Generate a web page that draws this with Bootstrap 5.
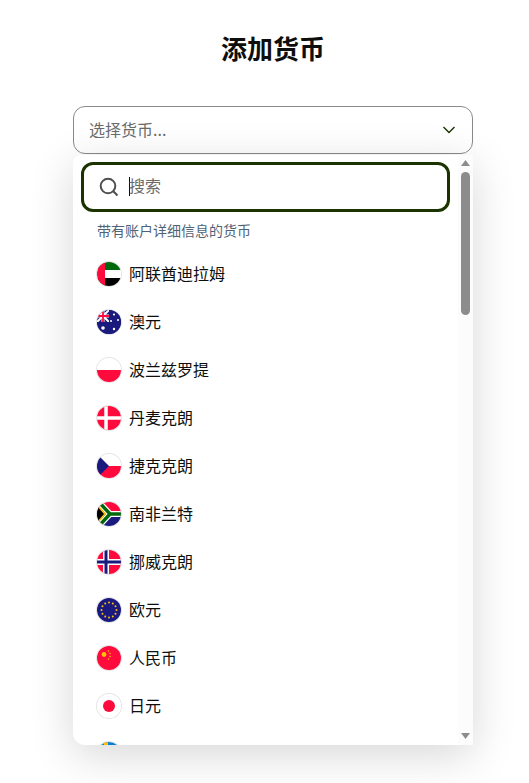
<!DOCTYPE html>
<html lang="zh">
<head>
<meta charset="utf-8">
<title>添加货币</title>
<link rel="stylesheet" href="https://cdn.jsdelivr.net/npm/bootstrap@5.3.0/dist/css/bootstrap.min.css">
<style>
html,body{height:100%;overflow:hidden;background:#fff}
body{font-family:"Noto Sans CJK SC","Noto Sans",sans-serif;color:#0e0f0c}
.shell{width:400px;margin-left:73px;padding-top:30px}
.page-title{font-size:26px;font-weight:700;line-height:36px;margin:0 0 40px;text-align:center;color:#0e0f0c}
.picker-wrap{position:relative}
.picker{height:48px;padding:0 16px 2px 15px;border:1px solid #8a8a8a;border-radius:12px;background:#fff;color:#6a6c6a;font-size:16px;line-height:24px}
.picker:hover,.picker:active{background:#fff;border-color:#8a8a8a;color:#6a6c6a}
.picker-chevron{position:relative;top:1px}
.menu-panel{position:absolute;left:0;top:49px;width:400px;height:590px;background:#fff;border-radius:8px 0 0 12px;box-shadow:0 10px 44px rgba(0,0,0,.16);overflow:hidden;padding-right:15px;z-index:2}
.menu-list{height:100%;overflow:hidden}
.scroll-rail{position:absolute;top:0;right:0;bottom:0;width:15px;background:#fcfcfc;padding:5px 3px}
.rail-up,.rail-down{display:block;width:9px;height:6px}
.rail-thumb{width:9px;height:143px;margin-top:6px;background:#8c8c8c;border-radius:5px}
.rail-down{position:absolute;left:3px;bottom:6px}
.search-box{height:50px;margin:7px 8px 0;border:3px solid #1b3300;border-radius:12px;padding:0 13px 0 15px;background:#fff}
.search-input{border:0;outline:0;padding:0;margin-left:-1px;box-shadow:none;font-size:16px;line-height:24px;color:#0e0f0c;background:transparent;position:relative;top:-2px}
.search-input:focus{box-shadow:none}
.search-input::placeholder{color:#6a6c6a;opacity:1}
.text-caret{width:1px;height:19px;background:#0e0f0c;flex:none;margin-left:2px;position:relative;top:-1px}
.group-label{font-size:14px;line-height:20px;color:#4f6375;padding:8px 24px 0;margin-bottom:10px}
.cur-row{height:48px;padding:0 24px;font-size:16px;line-height:24px;gap:8px;color:#0e0f0c}
.cur-name{position:relative;top:-1px}
.flag-disc{width:24px;height:24px;flex:none;border-radius:50%;display:block;box-shadow:0 0 0 1px #e4e4e4}
</style>
</head>
<body>
<main class="shell">
  <h1 class="page-title">添加货币</h1>
  <div class="picker-wrap">
  <button type="button" class="btn picker w-100 d-flex align-items-center justify-content-between">
    <span>选择货币...</span>
    <svg class="picker-chevron" width="14" height="8" viewBox="0 0 14 8" fill="none" stroke="#1b3300" stroke-width="1.400"><path d="M1.500 1l5.500 5.500L12.500 1"/></svg>
  </button>
  <div class="menu-panel">
    <div class="menu-list">
      <div class="search-box d-flex align-items-center">
        <svg width="20" height="20" viewBox="0 0 20 20" fill="none" stroke="#4f4f4f" stroke-width="2" class="flex-shrink-0 me-2"><circle cx="9" cy="9" r="7.300"/><path d="M14.300 14.300L18.500 18.500"/></svg>
        <span class="text-caret"></span>
        <input class="form-control search-input" type="text" placeholder="搜索">
      </div>
      <div class="group-label">带有账户详细信息的货币</div>
      <div class="cur-row d-flex align-items-center"><svg class="flag-disc" viewBox="0 0 24 24"><rect width="24" height="8" fill="#00680a"/><rect y="8" width="24" height="8" fill="#fff"/><rect y="16" width="24" height="8" fill="#000"/><rect width="8" height="24" fill="#ff0a3c"/></svg><span class="cur-name">阿联酋迪拉姆</span></div>
      <div class="cur-row d-flex align-items-center"><svg class="flag-disc" viewBox="0 0 24 24"><rect width="24" height="24" fill="#1a1a7e"/><path d="M0 0l12 12M12 0L0 12" stroke="#fff" stroke-width="2"/><path d="M6 0v12M0 6h12" stroke="#fff" stroke-width="3"/><path d="M6 0v12M0 6h12" stroke="#ff0a3c" stroke-width="1.800"/><rect x="12" width="12" height="24" fill="#1a1a7e"/><rect y="12" width="12" height="12" fill="#1a1a7e"/><g fill="#fff"><circle cx="6" cy="18" r="1.800"/><circle cx="17" cy="4.500" r="1.100"/><circle cx="21" cy="10" r="1"/><circle cx="14" cy="11" r="1"/><circle cx="17" cy="19" r="1.200"/></g></svg><span class="cur-name">澳元</span></div>
      <div class="cur-row d-flex align-items-center"><svg class="flag-disc" viewBox="0 0 24 24"><rect width="24" height="12" fill="#fff"/><rect y="12" width="24" height="12" fill="#ff0a3c"/></svg><span class="cur-name">波兰兹罗提</span></div>
      <div class="cur-row d-flex align-items-center"><svg class="flag-disc" viewBox="0 0 24 24"><rect width="24" height="24" fill="#ff0a3c"/><path d="M9 0v24M0 12h24" stroke="#fff" stroke-width="3.500"/></svg><span class="cur-name">丹麦克朗</span></div>
      <div class="cur-row d-flex align-items-center"><svg class="flag-disc" viewBox="0 0 24 24"><rect width="24" height="12" fill="#fff"/><rect y="12" width="24" height="12" fill="#ff0a3c"/><path d="M0 0l12 12L0 24z" fill="#1a1a7e"/></svg><span class="cur-name">捷克克朗</span></div>
      <div class="cur-row d-flex align-items-center"><svg class="flag-disc" viewBox="0 0 24 24"><rect width="24" height="12" fill="#ff0a3c"/><rect y="12" width="24" height="12" fill="#1a1a7e"/><path d="M0-2l13 14H24M0 26l13-14" fill="none" stroke="#fff" stroke-width="6"/><path d="M0-2l13 14H24M0 26l13-14" fill="none" stroke="#00680a" stroke-width="3.500"/><path d="M0 3l8 9-8 9" fill="#000" stroke="#ffc107" stroke-width="1.500"/></svg><span class="cur-name">南非兰特</span></div>
      <div class="cur-row d-flex align-items-center"><svg class="flag-disc" viewBox="0 0 24 24"><rect width="24" height="24" fill="#ff0a3c"/><path d="M9 0v24M0 12h24" stroke="#fff" stroke-width="6"/><path d="M9 0v24M0 12h24" stroke="#1a1a7e" stroke-width="3"/></svg><span class="cur-name">挪威克朗</span></div>
      <div class="cur-row d-flex align-items-center"><svg class="flag-disc" viewBox="0 0 24 24"><rect width="24" height="24" fill="#1a1a7e"/><g fill="#ffc107"><circle cx="12" cy="4.500" r="1"/><circle cx="15.800" cy="5.500" r="1"/><circle cx="18.500" cy="8.200" r="1"/><circle cx="19.500" cy="12" r="1"/><circle cx="18.500" cy="15.800" r="1"/><circle cx="15.800" cy="18.500" r="1"/><circle cx="12" cy="19.500" r="1"/><circle cx="8.200" cy="18.500" r="1"/><circle cx="5.500" cy="15.800" r="1"/><circle cx="4.500" cy="12" r="1"/><circle cx="5.500" cy="8.200" r="1"/><circle cx="8.200" cy="5.500" r="1"/></g></svg><span class="cur-name">欧元</span></div>
      <div class="cur-row d-flex align-items-center"><svg class="flag-disc" viewBox="0 0 24 24"><rect width="24" height="24" fill="#ff0a3c"/><g fill="#ffc107"><circle cx="7" cy="8.500" r="2.400"/><circle cx="11.500" cy="5" r=".8"/><circle cx="13" cy="7.500" r=".8"/><circle cx="13" cy="10.500" r=".8"/><circle cx="11.500" cy="13" r=".8"/></g></svg><span class="cur-name">人民币</span></div>
      <div class="cur-row d-flex align-items-center"><svg class="flag-disc" viewBox="0 0 24 24"><rect width="24" height="24" fill="#fff"/><circle cx="12" cy="12" r="6" fill="#ff0a3c"/></svg><span class="cur-name">日元</span></div>
      <div class="cur-row d-flex align-items-center"><svg class="flag-disc" viewBox="0 0 24 24"><rect width="24" height="24" fill="#0a7fd0"/><path d="M9 0v24M0 12h24" stroke="#ffc107" stroke-width="4"/></svg></div>
    </div>
    <div class="scroll-rail">
      <svg class="rail-up" viewBox="0 0 9 6"><path d="M0 6h9L4.500 0z" fill="#8c8c8c"/></svg>
      <div class="rail-thumb"></div>
      <svg class="rail-down" viewBox="0 0 9 6"><path d="M0 0h9L4.500 6z" fill="#8c8c8c"/></svg>
    </div>
  </div>
  </div>
</main>
<script src="https://cdn.jsdelivr.net/npm/bootstrap@5.3.0/dist/js/bootstrap.bundle.min.js"></script>
</body>
</html>
